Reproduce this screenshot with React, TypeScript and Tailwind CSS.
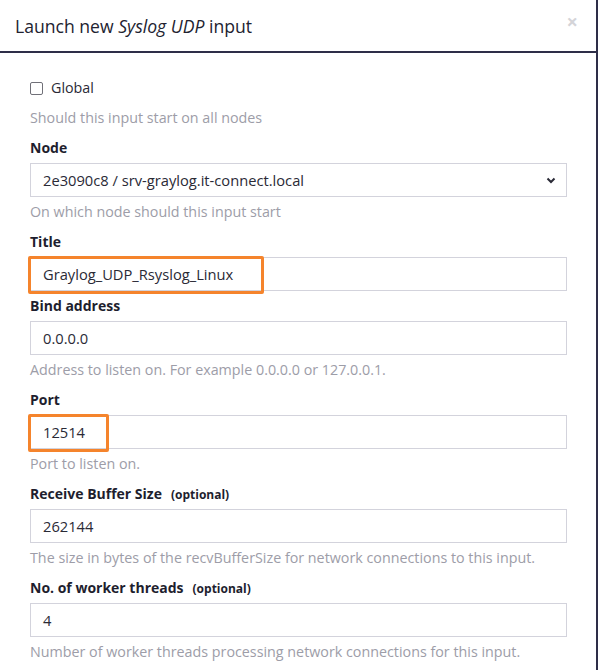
import React from "react";

const font = { fontFamily: "'Open Sans', 'Noto Sans', sans-serif" };

function Field({
  label,
  optional,
  value,
  help,
  highlight,
}: {
  label: string;
  optional?: boolean;
  value: string;
  help?: string;
  highlight?: string;
}) {
  return (
    <div className="flex flex-col">
      <div className="h-5 leading-5 text-[14px] font-bold text-[#1e1e2e] flex items-baseline">
        {label}
        {optional && <span className="ml-[9px] text-[12px] font-bold text-[#1e1e2e]">(optional)</span>}
      </div>
      <div className="relative mt-[5px] h-[34px] border border-[#d3d3dc] bg-white flex items-center pl-[12px] text-[14.7px] text-[#2a2a36]">
        {value}
        {highlight && (
          <div className={`absolute -left-[3px] -top-[2px] h-[38px] border-[3px] border-[#f5842c] rounded-[2px] ${highlight}`} />
        )}
      </div>
      {help && <div className="mt-[5px] h-5 leading-5 text-[14.3px] text-[#9d9da8]">{help}</div>}
      {help ? <div className="h-[10px]" /> : <div className="h-[5px]" />}
    </div>
  );
}

export default function App() {
  return (
    <div className="w-[600px] h-[670px] bg-white overflow-hidden" style={font}>
      <div className="w-[598px] h-full border-r-2 border-[#2e2e48]">
        <div className="relative h-[53px] border-b-2 border-[#2e2e48] flex items-center pl-[15px]">
          <div className="text-[17.6px] text-[#222230] mt-[1px]">
            Launch new <i>Syslog UDP</i> input
          </div>
          <div className="absolute right-[18px] top-[12px] text-[20px] font-bold text-[#d4d4d8] leading-none">×</div>
        </div>
        <div className="px-[30px] pt-[25px] pr-[29px]">
          <div className="flex items-center h-5">
            <span className="w-[13px] h-[13px] border border-[#707078] rounded-[2px]" />
            <span className="ml-[8px] text-[14.3px] text-[#2a2a36]">Global</span>
          </div>
          <div className="mt-[10px] h-5 leading-5 text-[14.3px] text-[#9d9da8]">Should this input start on all nodes</div>
          <div className="h-[10px]" />
          <div className="flex flex-col">
            <div className="h-5 leading-5 text-[14px] font-bold text-[#1e1e2e]">Node</div>
            <div className="mt-[5px] h-[34px] border border-[#d3d3dc] bg-white flex items-center justify-between pl-[12px] pr-[10px] text-[14.7px] text-[#2a2a36]">
              <span>2e3090c8 / srv-graylog.it-connect.local</span>
              <svg width="10" height="7" viewBox="0 0 10 7">
                <path d="M1.5 1.5 L5 5 L8.5 1.5" fill="none" stroke="#2a2a36" strokeWidth="2" />
              </svg>
            </div>
            <div className="mt-[5px] h-5 leading-5 text-[14.3px] text-[#9d9da8]">On which node should this input start</div>
            <div className="h-[10px]" />
          </div>
          <Field label="Title" value="Graylog_UDP_Rsyslog_Linux" highlight="w-[236px]" />
          <Field label="Bind address" value="0.0.0.0" help="Address to listen on. For example 0.0.0.0 or 127.0.0.1." />
          <Field label="Port" value="12514" help="Port to listen on." highlight="w-[81px]" />
          <Field
            label="Receive Buffer Size"
            optional
            value="262144"
            help="The size in bytes of the recvBufferSize for network connections to this input."
          />
          <Field
            label="No. of worker threads"
            optional
            value="4"
            help="Number of worker threads processing network connections for this input."
          />
        </div>
      </div>
    </div>
  );
}
